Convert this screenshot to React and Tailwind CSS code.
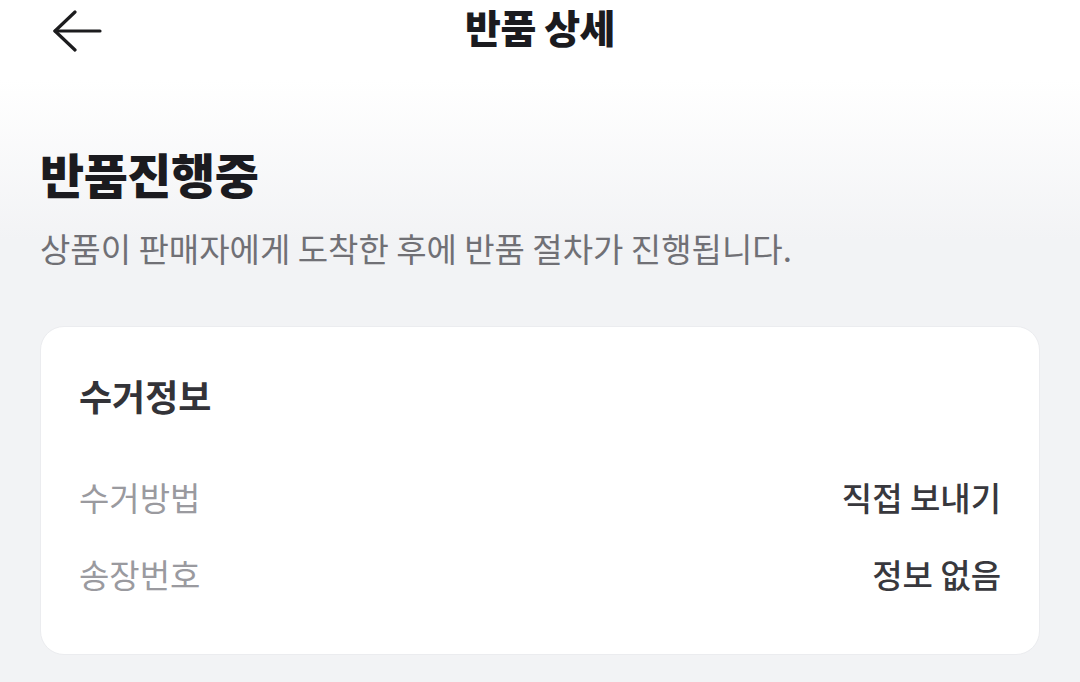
import React from 'react';

const rows = [
  { label: '수거방법', value: '직접 보내기' },
  { label: '송장번호', value: '정보 없음' },
];

export default function App() {
  return (
    <div
      className="w-[1080px] h-[682px] overflow-hidden bg-[linear-gradient(to_bottom,#ffffff_80px,#f2f3f5_240px)]"
      style={{ fontFamily: '"Noto Sans CJK KR", "Noto Sans", sans-serif' }}
    >
      {/* Header */}
      <header className="relative h-[64px] flex items-start justify-center pt-[3px]">
        <button className="absolute left-[52px] top-[10px] w-[52px] h-[44px] flex items-center" aria-label="뒤로">
          <svg width="52" height="44" viewBox="0 0 52 44" fill="none" stroke="#1c1c1e" strokeWidth="3.2" strokeLinecap="round" strokeLinejoin="round">
            <path d="M3 21 H48" />
            <path d="M23 2 L3 21 L23 40" />
          </svg>
        </button>
        <h1 className="text-[39px] font-black text-[#1b1b1f] leading-[1.2] tracking-[-0.5px]">반품 상세</h1>
      </header>

      {/* Status */}
      <section className="px-[40px] pt-[81px]">
        <h2 className="text-[48px] font-black text-[#1b1b1f] leading-[1.2] tracking-[-0.5px]">반품진행중</h2>
        <p className="mt-[26px] text-[33px] text-[#707075] leading-[1.2]">
          상품이 판매자에게 도착한 후에 반품 절차가 진행됩니다.
        </p>
      </section>

      {/* Pickup info card */}
      <div className="px-[40px] mt-[58px]">
        <div className="bg-white rounded-[24px] border border-[#ebecef] px-[38px] pt-[47px] pb-[59px]">
          <h3 className="text-[36px] font-bold text-[#333338] leading-[1.2]">수거정보</h3>
          <div className="mt-[61px] flex flex-col gap-[37px]">
            {rows.map((r) => (
              <div key={r.label} className="flex items-center justify-between">
                <span className="text-[33px] text-[#9a9a9f] leading-[1.2]">{r.label}</span>
                <span className="text-[33px] font-medium text-[#38383d] leading-[1.2]">{r.value}</span>
              </div>
            ))}
          </div>
        </div>
      </div>
    </div>
  );
}
